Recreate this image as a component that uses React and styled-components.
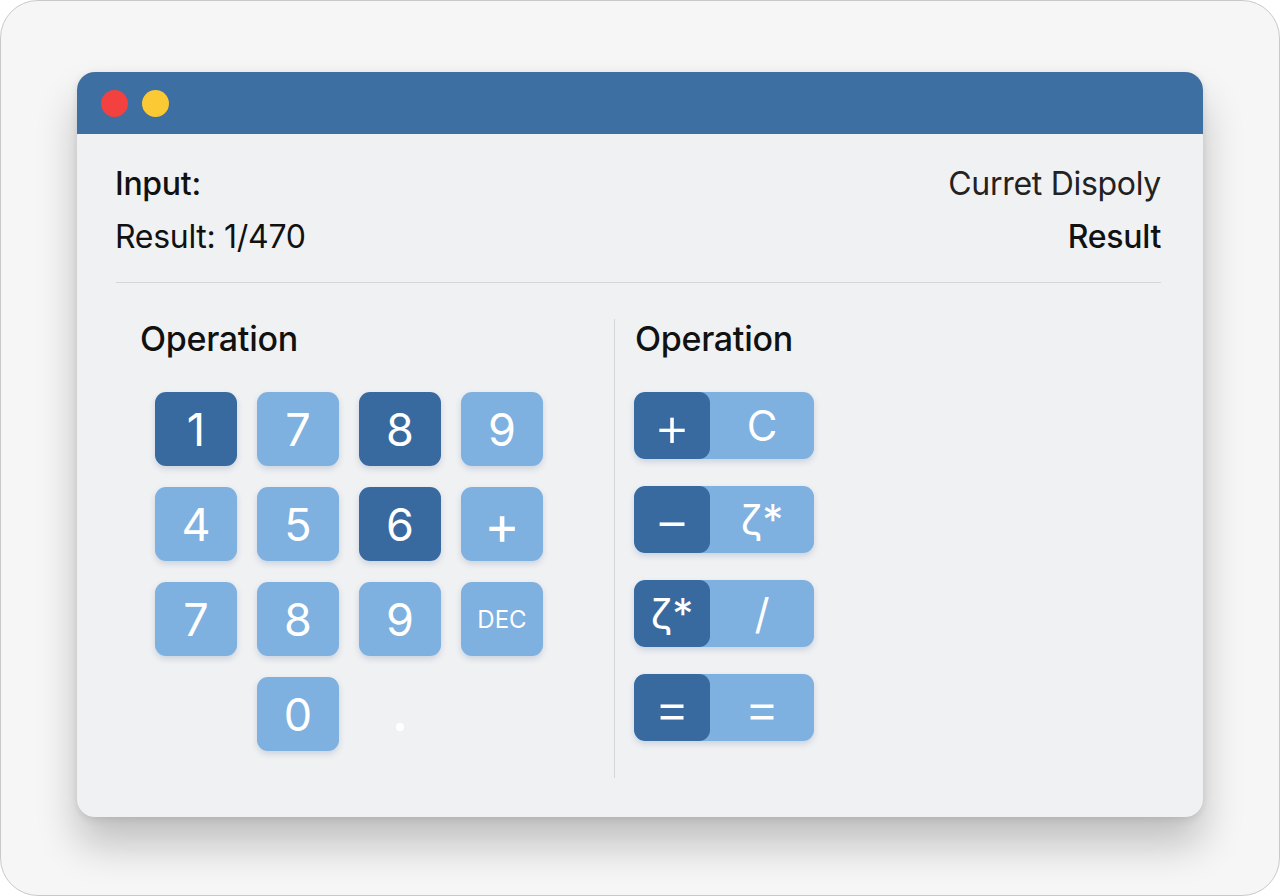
import React from "react";
import styled, { createGlobalStyle } from "styled-components";

const GlobalStyle = createGlobalStyle`
  html, body {
    margin: 0;
    padding: 0;
    background: #ffffff;
  }
  body {
    font-family: Inter, "Noto Sans", "Liberation Sans", sans-serif;
    color: #111;
  }
`;

const keys = [
  { label: "1", dark: true },
  { label: "7" },
  { label: "8", dark: true },
  { label: "9" },
  { label: "4" },
  { label: "5" },
  { label: "6", dark: true },
  { label: "+", big: true },
  { label: "7" },
  { label: "8" },
  { label: "9" },
  { label: "DEC", small: true },
];

// each row: [dark half, light half], big marks a wide symbol
const ops = [
  [{ t: "+", big: true }, { t: "C" }],
  [{ t: "−", big: true }, { t: "ζ*" }],
  [{ t: "ζ*" }, { t: "/" }],
  [{ t: "=", big: true }, { t: "=", big: true }],
];

const App = () => {
  return (
    <>
      <GlobalStyle />
      <Frame>
        <Window>
          <TitleBar>
            <Dot color="#f2413e" />
            <Dot color="#fbc933" />
          </TitleBar>
          <Body>
            <InfoRow>
              <InfoCol>
                <InfoLine strong>Input:</InfoLine>
                <InfoLine>Result: 1/470</InfoLine>
              </InfoCol>
              <InfoCol right>
                <InfoLine light>Curret Dispoly</InfoLine>
                <InfoLine strong>Result</InfoLine>
              </InfoCol>
            </InfoRow>
            <Divider />
            <Panels>
              <LeftPanel>
                <Heading>Operation</Heading>
                <Keypad>
                  {keys.map((k, i) => (
                    <Key key={i} dark={k.dark} small={k.small} big={k.big}>
                      {k.label}
                    </Key>
                  ))}
                  <Spacer />
                  <Key>0</Key>
                  <DotCell>
                    <Point />
                  </DotCell>
                </Keypad>
              </LeftPanel>
              <RightPanel>
                <Heading>Operation</Heading>
                <OpList>
                  {ops.map(([a, b], i) => (
                    <OpButton key={i}>
                      <OpPart dark big={a.big}>
                        {a.t}
                      </OpPart>
                      <OpPart big={b.big}>{b.t}</OpPart>
                    </OpButton>
                  ))}
                </OpList>
              </RightPanel>
            </Panels>
          </Body>
        </Window>
      </Frame>
    </>
  );
};

const Frame = styled.div`
  width: 1280px;
  height: 896px;
  box-sizing: border-box;
  border: 1px solid #c9c9cc;
  border-radius: 38px;
  background: #f6f6f7;
  padding: 71px 76px 0 76px;
  overflow: hidden;
`;

const Window = styled.div`
  width: 1126px;
  height: 745px;
  border-radius: 18px;
  background: #f0f1f3;
  box-shadow: 0 28px 40px rgba(0, 0, 0, 0.22), 0 2px 8px rgba(0, 0, 0, 0.1);
  overflow: hidden;
  display: flex;
  flex-direction: column;
`;

const TitleBar = styled.div`
  height: 62px;
  background: #3d6fa3;
  display: flex;
  align-items: center;
  gap: 14px;
  padding: 0 0 0 24px;
  flex-shrink: 0;
`;

const Dot = styled.span`
  width: 27px;
  height: 27px;
  border-radius: 50%;
  background: ${(p) => p.color};
`;

const Body = styled.div`
  padding: 30px 42px 0 38px;
  display: flex;
  flex-direction: column;
`;

const InfoRow = styled.div`
  display: flex;
  justify-content: space-between;
`;

const InfoCol = styled.div`
  display: flex;
  flex-direction: column;
  gap: 13px;
  align-items: ${(p) => (p.right ? "flex-end" : "flex-start")};
`;

const InfoLine = styled.div`
  font-size: 32px;
  line-height: 40px;
  font-weight: ${(p) => (p.strong ? 500 : 400)};
  color: ${(p) => (p.light ? "#222" : "#111")};
  letter-spacing: -0.3px;
`;

const Divider = styled.div`
  height: 1px;
  background: #d3d6dc;
  margin: 25px 0 0 1px;
`;

const Panels = styled.div`
  display: flex;
  padding-top: 36px;
`;

const LeftPanel = styled.div`
  width: 500px;
  box-sizing: border-box;
  padding-left: 24px;
  border-right: 1px solid #d4d6da;
  height: 459px;
`;

const RightPanel = styled.div`
  padding-left: 19px;
`;

const Heading = styled.div`
  font-size: 34px;
  line-height: 40px;
  font-weight: 500;
  padding-left: 1px;
  margin-bottom: 33px;
  letter-spacing: -0.3px;
`;

const Keypad = styled.div`
  display: grid;
  grid-template-columns: repeat(4, 82px);
  grid-auto-rows: 74px;
  column-gap: 20px;
  row-gap: 21px;
  margin-left: 16px;
`;

const Key = styled.div`
  border-radius: 11px;
  background: ${(p) => (p.dark ? "#386aa0" : "#7eb0e0")};
  color: #fff;
  display: flex;
  align-items: center;
  justify-content: center;
  font-size: ${(p) => (p.small ? "24px" : p.big ? "54px" : "45px")};
  font-weight: 400;
  box-shadow: 0 3px 6px rgba(40, 80, 130, 0.18);
`;

const Spacer = styled.div``;

const DotCell = styled.div`
  display: flex;
  justify-content: center;
  padding-top: 46px;
`;

const Point = styled.span`
  width: 8px;
  height: 8px;
  border-radius: 50%;
  background: #fff;
`;

const OpList = styled.div`
  display: flex;
  flex-direction: column;
  gap: 27px;
`;

const OpButton = styled.div`
  width: 180px;
  height: 67px;
  border-radius: 11px;
  overflow: hidden;
  display: flex;
  background: #7eb0e0;
  box-shadow: 0 3px 6px rgba(40, 80, 130, 0.18);
`;

const OpPart = styled.div`
  width: ${(p) => (p.dark ? "76px" : "auto")};
  flex: ${(p) => (p.dark ? "none" : 1)};
  background: ${(p) => (p.dark ? "#386aa0" : "transparent")};
  border-radius: ${(p) => (p.dark ? "11px" : "0")};
  color: #fff;
  display: flex;
  align-items: center;
  justify-content: center;
  font-size: ${(p) => (p.big ? "56px" : "42px")};
  font-weight: ${(p) => (p.big ? 300 : 400)};
  line-height: 1;
`;

export default App;
